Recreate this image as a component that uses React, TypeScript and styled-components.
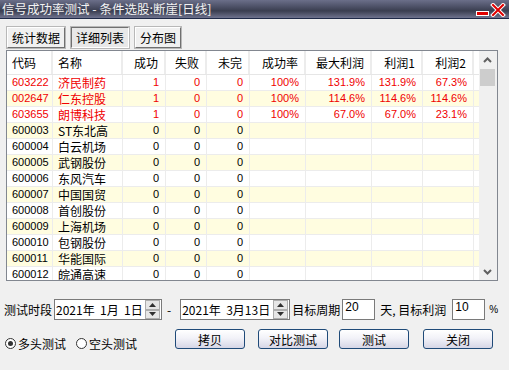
import styled, { createGlobalStyle } from "styled-components";

const GlobalStyle = createGlobalStyle`
  html, body { margin: 0; padding: 0; background: #f0f0f0; }
  body { font-family: "Noto Sans CJK SC", "Liberation Sans", sans-serif; }
`;

type Row = {
  code: string;
  name: string;
  ok: string;
  fail: string;
  open: string;
  rate?: string;
  max?: string;
  p1?: string;
  p2?: string;
  hit?: boolean;
};

const rows: Row[] = [
  { code: "603222", name: "济民制药", ok: "1", fail: "0", open: "0", rate: "100%", max: "131.9%", p1: "131.9%", p2: "67.3%", hit: true },
  { code: "002647", name: "仁东控股", ok: "1", fail: "0", open: "0", rate: "100%", max: "114.6%", p1: "114.6%", p2: "114.6%", hit: true },
  { code: "603655", name: "朗博科技", ok: "1", fail: "0", open: "0", rate: "100%", max: "67.0%", p1: "67.0%", p2: "23.1%", hit: true },
  { code: "600003", name: "ST东北高", ok: "0", fail: "0", open: "0" },
  { code: "600004", name: "白云机场", ok: "0", fail: "0", open: "0" },
  { code: "600005", name: "武钢股份", ok: "0", fail: "0", open: "0" },
  { code: "600006", name: "东风汽车", ok: "0", fail: "0", open: "0" },
  { code: "600007", name: "中国国贸", ok: "0", fail: "0", open: "0" },
  { code: "600008", name: "首创股份", ok: "0", fail: "0", open: "0" },
  { code: "600009", name: "上海机场", ok: "0", fail: "0", open: "0" },
  { code: "600010", name: "包钢股份", ok: "0", fail: "0", open: "0" },
  { code: "600011", name: "华能国际", ok: "0", fail: "0", open: "0" },
  { code: "600012", name: "皖通高速", ok: "0", fail: "0", open: "0" },
];

const COLS = "46px 70px 43px 41px 43px 56px 66px 51px 51px 5px";

function SpinButtons() {
  return (
    <Spinner>
      <SpinBtn>
        <svg width="7" height="4" viewBox="0 0 7 4">
          <path d="M0 4 L3.5 0 L7 4 Z" fill="#303030" />
        </svg>
      </SpinBtn>
      <SpinBtn>
        <svg width="7" height="4" viewBox="0 0 7 4">
          <path d="M0 0 L3.5 4 L7 0 Z" fill="#303030" />
        </svg>
      </SpinBtn>
    </Spinner>
  );
}

export default function App() {
  return (
    <Window>
      <GlobalStyle />
      <TitleBar>
        <TitleText>信号成功率测试 - 条件选股:断崖[日线]</TitleText>
        <TitleIcons>
          <svg width="30" height="14" viewBox="0 0 30 14">
            <rect x="0.5" y="8.5" width="12" height="4" fill="#e00000" stroke="#fff" strokeWidth="1" />
            <path d="M17 2 L27 12 M27 2 L17 12" stroke="#fff" strokeWidth="4" strokeLinecap="square" />
            <path d="M17 2 L27 12 M27 2 L17 12" stroke="#e00000" strokeWidth="2" strokeLinecap="square" />
          </svg>
        </TitleIcons>
      </TitleBar>

      <Tabs>
        <TabButton>统计数据</TabButton>
        <TabButton $active>详细列表</TabButton>
        <TabButton>分布图</TabButton>
      </Tabs>

      <TableBox>
        <TableScroll>
          <HeaderRow>
            <HeadCell>代码</HeadCell>
            <HeadCell>名称</HeadCell>
            <HeadCell $right>成功</HeadCell>
            <HeadCell $right>失败</HeadCell>
            <HeadCell $right>未完</HeadCell>
            <HeadCell $right>成功率</HeadCell>
            <HeadCell $right>最大利润</HeadCell>
            <HeadCell $right>利润1</HeadCell>
            <HeadCell $right>利润2</HeadCell>
            <HeadCell />
          </HeaderRow>
          {rows.map((r, i) => (
            <DataRow key={r.code} $alt={i % 2 === 1}>
              <Cell $red={r.hit} $num>{r.code}</Cell>
              <Cell $red={r.hit}>{r.name}</Cell>
              <Cell $red={r.hit} $num $right>{r.ok}</Cell>
              <Cell $red={r.hit} $num $right>{r.fail}</Cell>
              <Cell $red={r.hit} $num $right>{r.open}</Cell>
              <Cell $red={r.hit} $num $right>{r.rate}</Cell>
              <Cell $red={r.hit} $num $right>{r.max}</Cell>
              <Cell $red={r.hit} $num $right>{r.p1}</Cell>
              <Cell $red={r.hit} $num $right>{r.p2}</Cell>
              <Cell />
            </DataRow>
          ))}
        </TableScroll>
        <ScrollBar>
          <ScrollArrow>
            <svg width="9" height="6" viewBox="0 0 9 6">
              <path d="M1 5 L4.5 1.5 L8 5" stroke="#606060" strokeWidth="2" fill="none" />
            </svg>
          </ScrollArrow>
          <Thumb />
          <Track />
          <ScrollArrow>
            <svg width="9" height="6" viewBox="0 0 9 6">
              <path d="M1 1 L4.5 4.5 L8 1" stroke="#606060" strokeWidth="2" fill="none" />
            </svg>
          </ScrollArrow>
        </ScrollBar>
      </TableBox>

      <ControlRow>
        <Label>测试时段</Label>
        <DateBox $w={108}>
          <DateText>2021年&nbsp;&nbsp;1月&nbsp;&nbsp;1日</DateText>
          <SpinButtons />
        </DateBox>
        <Dash>-</Dash>
        <DateBox $w={110}>
          <DateText>2021年&nbsp;&nbsp;3月13日</DateText>
          <SpinButtons />
        </DateBox>
        <Label $ml={2}>目标周期</Label>
        <NumBox $ml={2}>20</NumBox>
        <Label $ml={5}>天, 目标利润</Label>
        <NumBox $ml={6}>10</NumBox>
        <Percent>%</Percent>
      </ControlRow>

      <ActionRow>
        <Radio>
          <RadioDot $on />
          <span>多头测试</span>
        </Radio>
        <Radio>
          <RadioDot />
          <span>空头测试</span>
        </Radio>
        <Buttons>
          <ActionButton>拷贝</ActionButton>
          <ActionButton $ml={13}>对比测试</ActionButton>
          <ActionButton $ml={11}>测试</ActionButton>
          <ActionButton $ml={14}>关闭</ActionButton>
        </Buttons>
      </ActionRow>
    </Window>
  );
}

const Window = styled.div`
  width: 509px;
  height: 370px;
  background: #f0f0f0;
  overflow: hidden;
  font-size: 12px;
  color: #000;
`;

const TitleBar = styled.div`
  height: 18px;
  display: flex;
  align-items: center;
  justify-content: space-between;
  background: linear-gradient(#6b6f89 0%, #4a4e64 40%, #3a3e50 60%, #6f738e 100%);
  border-bottom: 1px solid #1f2a48;
`;

const TitleText = styled.div`
  color: #f2f2f2;
  font-size: 12.5px;
  padding-left: 2px;
  line-height: 18px;
  white-space: nowrap;
`;

const TitleIcons = styled.div`
  display: flex;
  padding-right: 3px;
  padding-top: 2px;
`;

const Tabs = styled.div`
  display: flex;
  gap: 5px;
  padding: 8px 0 0 6px;
  height: 21px;
`;

const TabButton = styled.div<{ $active?: boolean }>`
  height: 19px;
  padding: 0 4px;
  display: flex;
  align-items: center;
  font-size: 12px;
  background: ${(p) => (p.$active ? "#e8e8e8" : "#f0f0f0")};
  border: 1px solid;
  border-color: ${(p) =>
    p.$active ? "#707070 #ffffff #ffffff #707070" : "#ffffff #707070 #707070 #ffffff"};
  box-shadow: 0 0 0 1px #b8b8b8;
  margin-left: 1px;
`;

const TableBox = styled.div`
  margin: 2px 0 0 6px;
  width: 490px;
  height: 229px;
  border: 1px solid #828790;
  background: #fff;
  display: flex;
  overflow: hidden;
`;

const TableScroll = styled.div`
  width: 472px;
  overflow: hidden;
`;

const HeaderRow = styled.div`
  display: grid;
  grid-template-columns: ${COLS};
  height: 23px;
  border-bottom: 1px solid #e6e6e6;
  background: #fff;
`;

const HeadCell = styled.div<{ $right?: boolean }>`
  border-right: 2px solid #ececec;
  display: flex;
  align-items: center;
  justify-content: ${(p) => (p.$right ? "flex-end" : "flex-start")};
  padding: 0 ${(p) => (p.$right ? "6px" : "5px")};
  font-size: 12px;
  white-space: nowrap;
`;

const DataRow = styled.div<{ $alt?: boolean }>`
  display: grid;
  grid-template-columns: ${COLS};
  height: 15px;
  border-bottom: 1px solid #ececec;
  background: ${(p) => (p.$alt ? "#fffde0" : "#ffffff")};
`;

const Cell = styled.div<{ $right?: boolean; $red?: boolean; $num?: boolean }>`
  border-right: 1px solid #ececec;
  display: flex;
  align-items: center;
  justify-content: ${(p) => (p.$right ? "flex-end" : "flex-start")};
  padding: 0 ${(p) => (p.$right ? "6px" : "5px")};
  color: ${(p) => (p.$red ? "#f00000" : "#000")};
  font-family: ${(p) =>
    p.$num ? '"Liberation Sans", sans-serif' : '"Noto Sans CJK SC", "Liberation Sans", sans-serif'};
  font-size: ${(p) => (p.$num ? "11px" : "12px")};
  line-height: 15px;
  white-space: nowrap;
  overflow: hidden;
`;

const ScrollBar = styled.div`
  width: 17px;
  background: #f0f0f0;
  display: flex;
  flex-direction: column;
  border-right: 1px solid #f0f0f0;
`;

const ScrollArrow = styled.div`
  height: 17px;
  display: flex;
  align-items: center;
  justify-content: center;
`;

const Thumb = styled.div`
  height: 17px;
  margin: 1px 1px 0;
  background: #cdcdcd;
`;

const Track = styled.div`
  flex: 1;
`;

const ControlRow = styled.div`
  display: flex;
  align-items: center;
  padding: 17px 0 0 4px;
  height: 23px;
`;

const Label = styled.span<{ $ml?: number }>`
  font-size: 12px;
  margin-left: ${(p) => p.$ml ?? 0}px;
  white-space: nowrap;
`;

const DateBox = styled.div<{ $w: number }>`
  width: ${(p) => p.$w}px;
  height: 21px;
  margin-left: 2px;
  border: 1px solid #7a7a7a;
  background: #fff;
  display: flex;
  align-items: center;
  justify-content: space-between;
  box-sizing: border-box;
`;

const DateText = styled.span`
  font-size: 12px;
  padding-left: 1px;
  white-space: nowrap;
`;

const Spinner = styled.div`
  width: 15px;
  height: 19px;
  display: flex;
  flex-direction: column;
  margin-right: 1px;
`;

const SpinBtn = styled.div`
  flex: 1;
  background: #e6e6e6;
  border: 1px solid #adadad;
  box-sizing: border-box;
  display: flex;
  align-items: center;
  justify-content: center;
`;

const Dash = styled.span`
  margin: 0 7px 0 5px;
  font-size: 12px;
`;

const NumBox = styled.div<{ $ml?: number }>`
  width: 33px;
  height: 21px;
  margin-left: ${(p) => p.$ml ?? 0}px;
  border: 1px solid #7a7a7a;
  background: #fff;
  box-sizing: border-box;
  font-family: "Liberation Sans", sans-serif;
  font-size: 12px;
  padding-left: 2px;
  line-height: 14px;
`;

const Percent = styled.span`
  margin-left: 4px;
  font-family: "Liberation Sans", sans-serif;
  font-size: 10px;
`;

const ActionRow = styled.div`
  display: flex;
  align-items: center;
  padding: 8px 0 0 5px;
  height: 20px;
`;

const Radio = styled.div`
  display: flex;
  align-items: center;
  gap: 2px;
  margin-right: 10px;
  margin-top: 8px;
  font-size: 12px;
`;

const RadioDot = styled.span<{ $on?: boolean }>`
  width: 11px;
  height: 11px;
  border-radius: 50%;
  border: 1px solid #333;
  background: #fff;
  box-sizing: border-box;
  display: inline-flex;
  align-items: center;
  justify-content: center;
  &::after {
    content: "";
    width: 5px;
    height: 5px;
    border-radius: 50%;
    background: ${(p) => (p.$on ? "#333" : "transparent")};
  }
`;

const Buttons = styled.div`
  display: flex;
  margin-left: 28px;
`;

const ActionButton = styled.div<{ $ml?: number }>`
  width: 70px;
  height: 20px;
  margin-left: ${(p) => p.$ml ?? 0}px;
  box-sizing: border-box;
  border: 1px solid #1f4a78;
  border-radius: 3px;
  background: linear-gradient(#ffffff 0%, #f2f2f8 45%, #d6d6e6 100%);
  display: flex;
  align-items: center;
  justify-content: center;
  font-size: 12px;
`;
